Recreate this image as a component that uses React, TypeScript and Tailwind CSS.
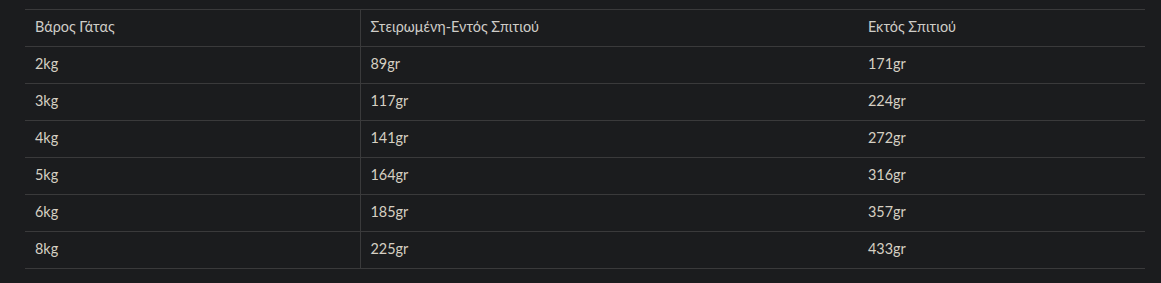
import React from "react";

const rows = [
  ["2kg", "89gr", "171gr"],
  ["3kg", "117gr", "224gr"],
  ["4kg", "141gr", "272gr"],
  ["5kg", "164gr", "316gr"],
  ["6kg", "185gr", "357gr"],
  ["8kg", "225gr", "433gr"],
];

export default function App() {
  return (
    <div className="min-h-[283px] w-full bg-[#1b1c1e] pt-[9px] pl-[25px] pr-4 font-['Lato','Noto_Sans',sans-serif] text-[14.4px]">
      <table className="w-[1120px] table-fixed border-collapse">
        <colgroup>
          <col className="w-[335px]" />
          <col className="w-[498px]" />
          <col className="w-[287px]" />
        </colgroup>
        <thead>
          <tr className="h-[37px] border-y border-[#3a3a3b] text-[#cfcdc8]">
            <th className="border-r border-[#3a3a3b] pb-[3px] pl-[10px] text-left font-normal">Βάρος Γάτας</th>
            <th className="pb-[3px] pl-[10px] text-left font-normal">Στειρωμένη-Εντός Σπιτιού</th>
            <th className="pb-[3px] pl-[10px] text-left font-normal">Εκτός Σπιτιού</th>
          </tr>
        </thead>
        <tbody className="text-[#d6d0c3]">
          {rows.map((r) => (
            <tr key={r[0]} className="h-[37px] border-b border-[#3a3a3b]">
              <td className="border-r border-[#3a3a3b] pb-[3px] pl-[10px]">{r[0]}</td>
              <td className="pb-[3px] pl-[10px]">{r[1]}</td>
              <td className="pb-[3px] pl-[10px]">{r[2]}</td>
            </tr>
          ))}
        </tbody>
      </table>
    </div>
  );
}
